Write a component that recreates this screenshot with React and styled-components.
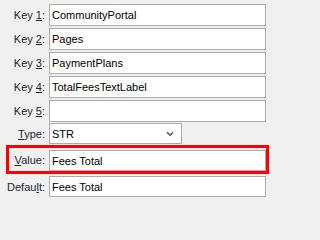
import React from 'react';
import styled, { createGlobalStyle } from 'styled-components';

const GlobalStyle = createGlobalStyle`
  html, body {
    margin: 0;
    padding: 0;
    background: #f0f0f0;
  }
  body {
    font-family: "Liberation Sans", Arial, sans-serif;
    font-size: 11px;
  }
`;

const Form = styled.div`
  width: 271px;
  height: 202px;
  box-sizing: border-box;
  padding: 4px 5px 0 0;
  display: flex;
  flex-direction: column;
`;

const Row = styled.div`
  display: flex;
  align-items: center;
  margin-top: ${(p) => p.$gap}px;
`;

const Label = styled.label`
  width: ${(p) => p.$width || 49}px;
  box-sizing: border-box;
  padding-right: 4px;
  text-align: right;
  color: #1c1f33;
  white-space: nowrap;
  flex-shrink: 0;
`;

const TextBox = styled.div`
  flex: 1;
  height: ${(p) => p.$h}px;
  box-sizing: border-box;
  border: 1px solid #ababab;
  background: #fff;
  color: #000;
  padding: 0 2px;
  display: flex;
  align-items: center;
  white-space: nowrap;
  overflow: hidden;
`;

const Select = styled.div`
  width: 133px;
  height: 21px;
  box-sizing: border-box;
  border: 1px solid #ababab;
  background: #fff;
  color: #000;
  padding: 0 7px 0 2px;
  display: flex;
  align-items: center;
  justify-content: space-between;
`;

const Highlight = styled.div`
  display: flex;
  align-items: flex-start;
  margin: 1px -3px 0 6px;
  padding-top: 2px;
  border: 3px solid #ff0000;
`;

const Chevron = () => (
  <svg width="8" height="6" viewBox="0 0 8 6">
    <path d="M1 1.2 L4 4.2 L7 1.2" fill="none" stroke="#555" strokeWidth="1.6" />
  </svg>
);

const keys = ['CommunityPortal', 'Pages', 'PaymentPlans', 'TotalFeesTextLabel', ''];

const App = () => (
  <>
    <GlobalStyle />
    <Form>
      {keys.map((v, i) => (
        <Row key={i} $gap={i === 0 ? 0 : 2}>
          <Label>
            Key <u>{i + 1}</u>:
          </Label>
          <TextBox $h={22}>{v}</TextBox>
        </Row>
      ))}
      <Row $gap={1}>
        <Label>
          <u>T</u>ype:
        </Label>
        <Select>
          <span>STR</span>
          <Chevron />
        </Select>
      </Row>
      <Highlight>
        <Label $width={40} style={{ lineHeight: '21px' }}>
          <u>V</u>alue:
        </Label>
        <TextBox $h={21}>Fees Total</TextBox>
      </Highlight>
      <Row $gap={2}>
        <Label>
          Defau<u>l</u>t:
        </Label>
        <TextBox $h={21}>Fees Total</TextBox>
      </Row>
    </Form>
  </>
);

export default App;
